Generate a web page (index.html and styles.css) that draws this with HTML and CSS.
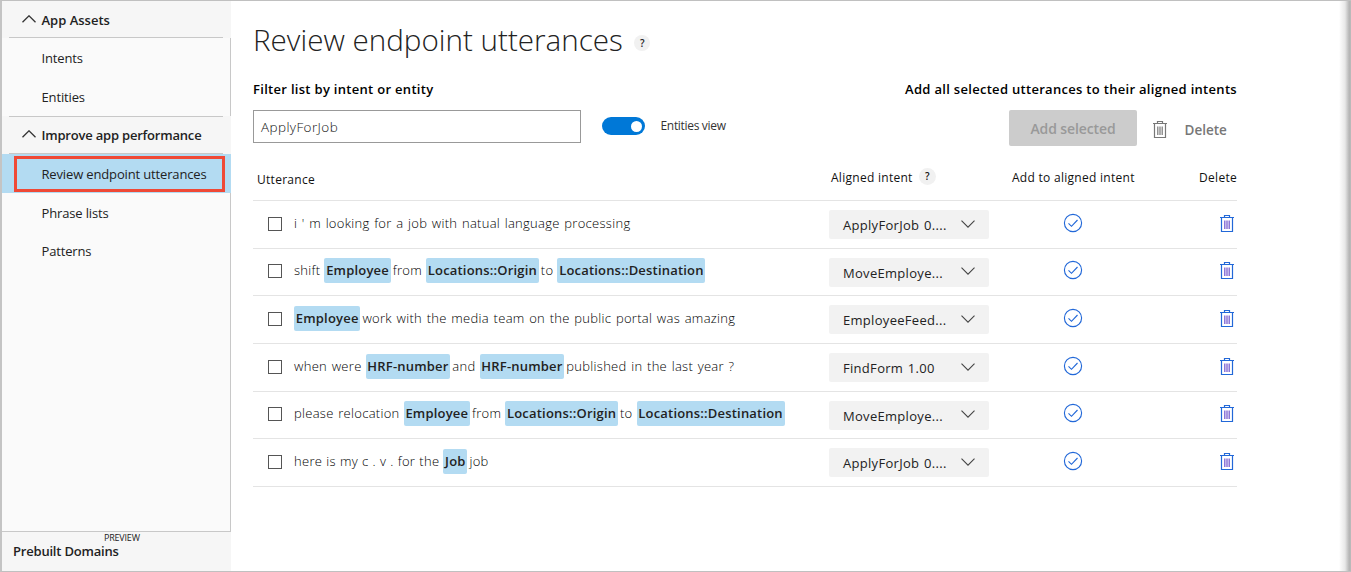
FILE: index.html
```html
<!DOCTYPE html>
<html lang="en">
<head>
<meta charset="utf-8">
<title>Review endpoint utterances</title>
<link rel="stylesheet" href="styles.css">
</head>
<body>
<svg class="sprite" width="0" height="0">
  <symbol id="trash" viewBox="0 0 16 20">
    <path d="M1 4.500h14M5.500 4V2.500h5V4M2.500 4.500v14h11v-14" fill="none" stroke="currentColor" stroke-width="1.2"/>
    <path d="M5.800 7.500v8.500M8 7.500v8.500M10.200 7.500v8.500" fill="none" stroke="#7a5fd0" stroke-width="1.300" class="bars"/>
  </symbol>
  <symbol id="trash-grey" viewBox="0 0 16 20">
    <path d="M1 4.500h14M5.500 4V2.500h5V4M2.500 4.500v14h11v-14" fill="none" stroke="currentColor" stroke-width="1.2"/>
    <path d="M5.800 7.500v8.500M8 7.500v8.500M10.200 7.500v8.500" fill="none" stroke="currentColor" stroke-width="1.200"/>
  </symbol>
  <symbol id="check" viewBox="0 0 20 20">
    <circle cx="10" cy="10" r="8.600" fill="none" stroke="currentColor" stroke-width="1.15"/>
    <path d="M5.500 10.300l3 3 6-6.300" fill="none" stroke="currentColor" stroke-width="1.15"/>
  </symbol>
  <symbol id="down" viewBox="0 0 14 8"><path d="M.5 .7L7 7.200 13.500 .7" fill="none" stroke="currentColor" stroke-width="1.1"/></symbol>
  <symbol id="up" viewBox="0 0 14 8"><path d="M.5 7.300L7 .8 13.500 7.300" fill="none" stroke="currentColor" stroke-width="1.3"/></symbol>
</svg>
<div class="app">
  <nav class="sidebar">
    <div class="group-head first"><svg class="chev"><use href="#up"/></svg><span class="t-assets">App Assets</span></div>
    <div class="items"><a class="item">Intents</a><a class="item">Entities</a></div>
    <div class="group-head second"><svg class="chev"><use href="#up"/></svg><span class="t-improve">Improve app performance</span></div>
    <a class="item active"><span>Review endpoint utterances</span></a>
    <div class="items grow"><a class="item">Phrase lists</a><a class="item">Patterns</a></div>
    <div class="prebuilt"><span class="preview">PREVIEW</span><span class="domains">Prebuilt Domains</span></div>
  </nav>
  <main class="main">
    <div class="title"><h1>Review endpoint utterances</h1><span class="help">?</span></div>
    <div class="labels"><span class="l-filter">Filter list by intent or entity</span><span class="l-add">Add all selected utterances to their aligned intents</span></div>
    <div class="tools">
      <div class="search">ApplyForJob</div>
      <span class="toggle"><i></i></span><span class="toggle-label">Entities view</span>
      <button class="add">Add selected</button>
      <svg class="trash grey"><use href="#trash-grey"/></svg><span class="del">Delete</span>
    </div>
    <div class="row thead">
      <span class="h-utt">Utterance</span>
      <span class="h-intent">Aligned intent<span class="help small">?</span></span>
      <span class="h-add">Add to aligned intent</span>
      <span class="h-del">Delete</span>
    </div>
    <div class="row"><i class="box"></i><p class="utt">i ' m looking for a job with natual language processing</p><div class="select"><span>ApplyForJob 0....</span><svg><use href="#down"/></svg></div><svg class="check"><use href="#check"/></svg><svg class="trash"><use href="#trash"/></svg></div>
    <div class="row"><i class="box"></i><p class="utt"><span>shift</span><b>Employee</b><span>from</span><b>Locations::Origin</b><span>to</span><b>Locations::Destination</b></p><div class="select"><span>MoveEmploye...</span><svg><use href="#down"/></svg></div><svg class="check"><use href="#check"/></svg><svg class="trash"><use href="#trash"/></svg></div>
    <div class="row"><i class="box"></i><p class="utt"><b class="lead">Employee</b><span>work with the media team on the public portal was amazing</span></p><div class="select"><span>EmployeeFeed...</span><svg><use href="#down"/></svg></div><svg class="check"><use href="#check"/></svg><svg class="trash"><use href="#trash"/></svg></div>
    <div class="row"><i class="box"></i><p class="utt"><span>when were</span><b>HRF-number</b><span>and</span><b>HRF-number</b><span>published in the last year ?</span></p><div class="select"><span>FindForm 1.00</span><svg><use href="#down"/></svg></div><svg class="check"><use href="#check"/></svg><svg class="trash"><use href="#trash"/></svg></div>
    <div class="row"><i class="box"></i><p class="utt"><span>please relocation</span><b>Employee</b><span>from</span><b>Locations::Origin</b><span>to</span><b>Locations::Destination</b></p><div class="select"><span>MoveEmploye...</span><svg><use href="#down"/></svg></div><svg class="check"><use href="#check"/></svg><svg class="trash"><use href="#trash"/></svg></div>
    <div class="row"><i class="box"></i><p class="utt"><span class="dotted">here is my c . v . for the</span><b>Job</b><span>job</span></p><div class="select"><span>ApplyForJob 0....</span><svg><use href="#down"/></svg></div><svg class="check"><use href="#check"/></svg><svg class="trash"><use href="#trash"/></svg></div>
  </main>
  <div class="edge"></div>
</div>
</body>
</html>
```
FILE: styles.css
```css
* { box-sizing: border-box; }
body { margin: 0; font-family: "Open Sans", "Noto Sans", sans-serif; font-size: 13px; color: #222; background: #fff; }
.sprite { display: block; }
.app { display: flex; width: 1351px; height: 572px; border-left: 2px solid #c4c4c4; border-top: 1px solid #c0c0c0; border-bottom: 1px solid #c0c0c0; overflow: hidden; white-space: nowrap; }
.sidebar { width: 229px; flex: none; display: flex; flex-direction: column; background: #f6f6f6; }
.group-head { display: flex; align-items: center; gap: 6px; margin: 0 8px 0 7px; padding: 2px 0 0 12.500px; height: 37px; border-bottom: 1px solid #c8c8c8; font-weight: 600; }
.group-head.second { height: 38px; border-top: 1px solid #c8c8c8; padding-top: 0; }
.t-improve { letter-spacing: -.2px; }
.chev { width: 14px; height: 8px; flex: none; color: #333; margin-top: -2px; }
.items { background: #fafafa; border-right: 1px solid #c8c8c8; }
.items.grow { flex: 1; }
.item { display: flex; align-items: center; height: 39px; padding: 0 0 0 39.500px; font-size: 13px; letter-spacing: -.15px; }
.item:last-child { padding-top: 1px; }
.items.grow .item:last-child { padding: 0 0 2px 39.500px; }
.item.active { padding: 2px 6px 1px 12px; background: #b3dbf2; height: 39px; }
.item.active span { display: flex; align-items: center; width: 211px; height: 36px; border: 3px solid #ef4936; padding-left: 24.500px; }
.prebuilt { height: 40px; border-top: 1px solid #c8c8c8; padding-left: 11px; display: flex; flex-direction: column; }
.preview { font-size: 9px; line-height: 12px; margin-left: 91px; letter-spacing: -.2px; }
.domains { font-weight: 600; line-height: 15px; letter-spacing: -.2px; }
.main { width: 984px; margin-left: 22px; flex: none; display: flex; flex-direction: column; }
.title { display: flex; height: 78px; padding-top: 17px; }
h1 { margin: 0; font-size: 29.600px; line-height: 44px; font-weight: 300; }
.help { width: 16px; height: 16px; margin: 17px 0 0 11.500px; border-radius: 50%; background: #f1f1f1; font-size: 10px; line-height: 16px; font-weight: 600; text-align: center; }
.help.small { width: 17px; height: 17px; margin: -1px 0 0 6px; line-height: 17px; letter-spacing: 0; }
.labels { display: flex; justify-content: space-between; height: 31px; line-height: 21px; font-weight: 600; color: #000; letter-spacing: .3px; }
.tools { display: flex; height: 49px; color: #333; }
.search { width: 328px; height: 33px; padding-left: 7px; border: 1px solid #999; line-height: 32px; font-size: 13.500px; letter-spacing: .4px; font-weight: 300; color: #111; }
.toggle { width: 43px; height: 18px; margin: 7px 0 0 21px; border-radius: 9px; background: #0078d7; display: flex; justify-content: flex-end; padding: 4px 3px; }
.toggle i { width: 11px; height: 11px; border-radius: 50%; background: #fff; }
.toggle-label { margin: 6px 0 0 15.500px; width: 66.500px; line-height: 19px; font-size: 12px; letter-spacing: -.32px; }
.add { width: 128px; height: 36px; margin-left: 282px; padding: 0; border: 0; border-radius: 2px; background: #ccc; color: #999; font: 600 14px "Open Sans", sans-serif; letter-spacing: -.1px; }
.tools .trash { margin: 9px 0 0 15px; }
.del { margin: 10px 0 0 16.500px; line-height: 20px; font-size: 13.500px; font-weight: 600; color: #777; }
.row { display: grid; grid-template-columns: 41px 535px 160px 168px 80px; height: 47.670px; border-bottom: 1px solid #e4e4e4; flex: none; }
.thead { height: 42px; font-size: 12px; line-height: 18px; font-weight: 500; color: #111; letter-spacing: .28px; }
.h-utt { grid-column: 1 / 3; padding: 12px 0 0 4px; }
.h-intent { display: flex; padding: 10px 0 0 2px; }
.h-add { padding: 10px 0 0 23px; }
.h-del { padding-top: 10px; text-align: right; }
.box { width: 14px; height: 14px; margin: 15.800px 0 0 15px; border: 1px solid #555; }
.utt { display: flex; margin: 9.800px 0 0; height: 25px; line-height: 25px; font-weight: 300; color: #000; letter-spacing: .29px; word-spacing: .95px; }
.utt b { background: #b3dbf2; border-radius: 2px; font-weight: 600; color: #222; padding: 0 1.800px 0 1.800px; margin: 0 2px 0 4px; letter-spacing: .19px; }
.utt b.lead { margin-left: 0; }
.utt .dotted { word-spacing: .4px; }
.select { display: flex; align-items: flex-start; width: 160px; height: 29px; margin-top: 9px; padding-left: 14px; line-height: 31px; border-radius: 2px; background: #f2f2f2; letter-spacing: .3px; word-spacing: 1px; }
.select span { width: 118px; }
.select svg { width: 14px; height: 8px; margin-top: 9.800px; color: #444; }
.check { width: 20px; height: 20px; margin: 11.800px 0 0 74px; color: #2268d8; }
.trash { width: 16px; height: 20px; flex: none; color: #2268d8; margin: 11.800px 0 0 62px; }
.trash.grey { color: #777; }
.edge { width: 12px; margin-left: auto; background: linear-gradient(90deg, #fff, #e8e8e8 50%, #b5b5b5 85%, #bbb); }
```
